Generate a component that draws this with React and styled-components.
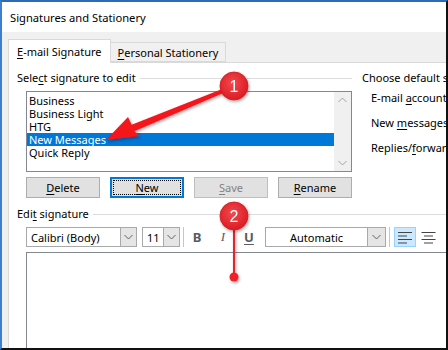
import styled, { createGlobalStyle } from "styled-components";

const GlobalStyle = createGlobalStyle`
  html, body {
    margin: 0;
    padding: 0;
    background: #fff;
  }
`;

const Frame = styled.div`
  width: 448px;
  height: 350px;
  box-sizing: border-box;
  border-top: 2px solid #2d6cb5;
  border-left: 2px solid #3b80cf;
  border-right: 2px solid #111;
  border-bottom: 2px solid #111;
  position: relative;
  overflow: hidden;
  background: #f0f0f0;
  display: flex;
  flex-direction: column;
  font-family: "Noto Sans", "Open Sans", sans-serif;
  font-size: 11px;
  color: #000;
  white-space: nowrap;
`;

const TitleBar = styled.div`
  height: 30px;
  flex: none;
  background: #fff;
  display: flex;
  align-items: center;
  padding-left: 8px;
  font-size: 11.2px;
`;

const TabRow = styled.div`
  display: flex;
  align-items: flex-end;
  height: 24px;
  margin-top: 6px;
  padding-left: 6px;
  flex: none;
`;

const Tab = styled.div`
  box-sizing: border-box;
  height: ${(p) => (p.$active ? "24px" : "20px")};
  margin-bottom: ${(p) => (p.$active ? "-1px" : "0")};
  padding: 0 ${(p) => (p.$active ? "8px" : "7px")};
  border: 1px solid #d9d9d9;
  border-bottom: ${(p) => (p.$active ? "none" : "1px solid #d9d9d9")};
  border-left: ${(p) => (p.$active ? "1px solid #d9d9d9" : "none")};
  background: ${(p) => (p.$active ? "#fff" : "#f0f0f0")};
  display: flex;
  align-items: center;
  position: relative;
  z-index: 1;
  padding-bottom: ${(p) => (p.$active ? "1px" : "0")};
`;

const Panel = styled.div`
  flex: 1;
  margin-left: 6px;
  background: #fff;
  border-top: 1px solid #d9d9d9;
  border-left: 1px solid #d9d9d9;
  padding: 8px 0 0 8px;
  display: flex;
  flex-direction: column;
  width: 560px;
`;

const TopSection = styled.div`
  display: flex;
`;

const LeftColumn = styled.div`
  width: 335px;
  display: flex;
  flex-direction: column;
  flex: none;
`;

const RightColumn = styled.div`
  margin-left: 10px;
  display: flex;
  flex-direction: column;
  width: 220px;
`;

const GroupHeader = styled.div`
  display: flex;
  align-items: center;
  height: 14px;
  line-height: 14px;
  gap: 4px;

  &::after {
    content: "";
    flex: 1;
    height: 1px;
    background: #dcdcdc;
  }
`;

const U = styled.span`
  text-decoration: underline;
  text-underline-offset: 2px;
`;

const ListBox = styled.div`
  margin: 6px 0 0 9px;
  width: 326px;
  height: 81px;
  box-sizing: border-box;
  border: 1px solid #828790;
  display: flex;
`;

const ListItems = styled.div`
  flex: 1;
  padding-top: 2px;
  display: flex;
  flex-direction: column;
`;

const ListItem = styled.div`
  height: 13px;
  line-height: 13px;
  padding-left: 2px;
  background: ${(p) => (p.$selected ? "#0078d7" : "transparent")};
  color: ${(p) => (p.$selected ? "#fff" : "#000")};
`;

const ScrollBar = styled.div`
  width: 17px;
  background: #f0f0f0;
  display: flex;
  flex-direction: column;
  justify-content: space-between;
  align-items: center;
  padding: 5px 0;
`;

const ButtonRow = styled.div`
  margin: 5px 0 0 9px;
  width: 326px;
  display: flex;
  justify-content: space-between;
`;

const Button = styled.div`
  box-sizing: border-box;
  width: 74px;
  height: 21px;
  background: #e1e1e1;
  border: ${(p) => (p.$default ? "2px solid #0078d7" : "1px solid #adadad")};
  color: ${(p) => (p.$disabled ? "#838383" : "#000")};
  border-color: ${(p) => (p.$disabled ? "#bfbfbf" : p.$default ? "#0078d7" : "#adadad")};
  display: flex;
  align-items: center;
  justify-content: center;
  position: relative;

  &::before {
    content: "";
    display: ${(p) => (p.$default ? "block" : "none")};
    position: absolute;
    inset: 1px;
    border: 1px dotted #000;
  }
`;

const OptionRows = styled.div`
  margin: 6px 0 0 9px;
  display: flex;
  flex-direction: column;
  gap: 11px;
`;

const OptionRow = styled.div`
  height: 14px;
  line-height: 14px;
`;

const EditSection = styled.div`
  margin-top: 9px;
  display: flex;
  flex-direction: column;
  flex: 1;
`;

const Toolbar = styled.div`
  margin: 6px 0 0 9px;
  height: 20px;
  display: flex;
  align-items: center;
`;

const Combo = styled.div`
  box-sizing: border-box;
  width: ${(p) => p.$width}px;
  height: 20px;
  margin-left: ${(p) => p.$gap || 0}px;
  border: 1px solid #a9a9a9;
  background: #fff;
  display: flex;
  align-items: stretch;
`;

const ComboText = styled.div`
  flex: 1;
  display: flex;
  align-items: center;
  justify-content: ${(p) => (p.$center ? "center" : "flex-start")};
  padding-left: ${(p) => (p.$center ? "0" : "4px")};
`;

const ComboArrow = styled.div`
  width: ${(p) => p.$width || 15}px;
  background: #e5e5e5;
  border-left: 1px solid #a9a9a9;
  display: flex;
  align-items: center;
  justify-content: center;
`;

const Separator = styled.div`
  width: 1px;
  height: 20px;
  background: #c6c6c6;
  margin-left: ${(p) => p.$gap}px;
`;

const FormatButton = styled.div`
  width: 26px;
  height: 20px;
  display: flex;
  align-items: center;
  justify-content: center;
  color: #5b5b5b;
  font-size: 13px;
  font-weight: ${(p) => (p.$bold ? 700 : 400)};
  font-style: ${(p) => (p.$italic ? "italic" : "normal")};
  font-family: ${(p) => (p.$italic ? '"Liberation Serif", serif' : '"Noto Sans", sans-serif')};
  text-decoration: ${(p) => (p.$underline ? "underline" : "none")};
  text-underline-offset: 2px;
  &:first-of-type {
    margin-left: 2px;
  }
`;

const AlignButton = styled.div`
  box-sizing: border-box;
  width: 22px;
  height: 20px;
  margin-left: ${(p) => p.$gap}px;
  background: ${(p) => (p.$active ? "#cce8ff" : "transparent")};
  border: 1px solid ${(p) => (p.$active ? "#99d1ff" : "transparent")};
  display: flex;
  align-items: center;
  justify-content: center;
`;

const Editor = styled.div`
  margin: 5px 0 0 9px;
  flex: 1;
  background: #fff;
  border-top: 1px solid #828790;
  border-left: 1px solid #828790;
`;

const Overlay = styled.svg`
  position: absolute;
  left: 0;
  top: 0;
  pointer-events: none;
`;

const Chevron = ({ up, color = "#606060" }) => (
  <svg width="9" height="6" viewBox="0 0 9 6">
    <path
      d={up ? "M0.5 5 L4.5 1 L8.5 5" : "M0.5 1 L4.5 5 L8.5 1"}
      fill="none"
      stroke={color}
      strokeWidth="1"
    />
  </svg>
);

const AlignIcon = ({ center }) => {
  const lines = [
    [0, 14],
    [1, 9],
    [2, 14],
    [3, 9],
  ];
  return (
    <svg width="16" height="14" viewBox="0 0 16 14">
      {lines.map(([i, w]) => {
        const x = center ? (15 - w) / 2 : 1;
        return (
          <rect key={i} x={x} y={2 + i * 3.5} width={w} height="1" fill="#444" />
        );
      })}
    </svg>
  );
};

const Marker = ({ cx, cy, label }) => (
  <g filter="url(#shadow)">
    <circle cx={cx} cy={cy} r="14" fill="url(#redGrad)" stroke="#d11a20" strokeWidth="0.8" />
    <text
      x={cx}
      y={cy + 5.5}
      textAnchor="middle"
      fill="#fff"
      fontSize="16"
      fontFamily='"Liberation Sans", Arial, sans-serif'
    >
      {label}
    </text>
  </g>
);

const signatures = ["Business", "Business Light", "HTG", "New Messages", "Quick Reply"];

export default function App() {
  return (
    <>
      <GlobalStyle />
      <Frame>
        <TitleBar>Signatures and Stationery</TitleBar>
        <TabRow>
          <Tab $active>
            <span>
              <U>E</U>-mail Signature
            </span>
          </Tab>
          <Tab>
            <span>
              <U>P</U>ersonal Stationery
            </span>
          </Tab>
        </TabRow>
        <Panel>
          <TopSection>
            <LeftColumn>
              <GroupHeader>
                <span>
                  Sele<U>c</U>t signature to edit
                </span>
              </GroupHeader>
              <ListBox>
                <ListItems>
                  {signatures.map((s) => (
                    <ListItem key={s} $selected={s === "New Messages"}>
                      {s}
                    </ListItem>
                  ))}
                </ListItems>
                <ScrollBar>
                  <Chevron up color="#a3a3a3" />
                  <Chevron color="#a3a3a3" />
                </ScrollBar>
              </ListBox>
              <ButtonRow>
                <Button>
                  <span>
                    <U>D</U>elete
                  </span>
                </Button>
                <Button $default>
                  <span>
                    <U>N</U>ew
                  </span>
                </Button>
                <Button $disabled>
                  <span>
                    <U>S</U>ave
                  </span>
                </Button>
                <Button>
                  <span>
                    <U>R</U>ename
                  </span>
                </Button>
              </ButtonRow>
            </LeftColumn>
            <RightColumn>
              <GroupHeader>
                <span>Choose default signature</span>
              </GroupHeader>
              <OptionRows>
                <OptionRow>
                  E-mail <U>a</U>ccount:
                </OptionRow>
                <OptionRow>
                  New <U>m</U>essages:
                </OptionRow>
                <OptionRow>
                  Replies/<U>f</U>orwards:
                </OptionRow>
              </OptionRows>
            </RightColumn>
          </TopSection>
          <EditSection>
            <GroupHeader>
              <span>
                Edi<U>t</U> signature
              </span>
            </GroupHeader>
            <Toolbar>
              <Combo $width={111}>
                <ComboText>Calibri (Body)</ComboText>
                <ComboArrow>
                  <Chevron />
                </ComboArrow>
              </Combo>
              <Combo $width={38} $gap={5}>
                <ComboText>11</ComboText>
                <ComboArrow>
                  <Chevron />
                </ComboArrow>
              </Combo>
              <Separator $gap={3} />
              <FormatButton $bold>B</FormatButton>
              <FormatButton $italic>I</FormatButton>
              <FormatButton $bold $underline>
                U
              </FormatButton>
              <Combo $width={121} $gap={3}>
                <ComboText $center>Automatic</ComboText>
                <ComboArrow $width={17}>
                  <Chevron />
                </ComboArrow>
              </Combo>
              <Separator $gap={3} />
              <AlignButton $active $gap={4}>
                <AlignIcon />
              </AlignButton>
              <AlignButton $gap={2}>
                <AlignIcon center />
              </AlignButton>
            </Toolbar>
            <Editor />
          </EditSection>
        </Panel>

        <Overlay width="448" height="350" viewBox="0 0 448 350">
          <defs>
            <radialGradient id="redGrad" cx="0.45" cy="0.4" r="0.6">
              <stop offset="0" stopColor="#f04a4e" />
              <stop offset="1" stopColor="#dc1c23" />
            </radialGradient>
            <filter id="shadow" x="-50%" y="-50%" width="200%" height="200%">
              <feDropShadow dx="1" dy="1.5" stdDeviation="1.5" floodColor="#000" floodOpacity="0.35" />
            </filter>
          </defs>
          <polygon
            points="104,138 126,115 129.7,122.8 227.2,84.2 228.8,87.8 132.3,129.2 138,134"
            fill="#f5141b"
            filter="url(#shadow)"
          />
          <Marker cx={232} cy={84} label="1" />
          <g filter="url(#shadow)">
            <line x1="232" y1="226" x2="232" y2="275" stroke="#ea2329" strokeWidth="2" />
            <circle cx="232" cy="275" r="4.5" fill="#ee2128" />
          </g>
          <Marker cx={232} cy={214} label="2" />
        </Overlay>
      </Frame>
    </>
  );
}
